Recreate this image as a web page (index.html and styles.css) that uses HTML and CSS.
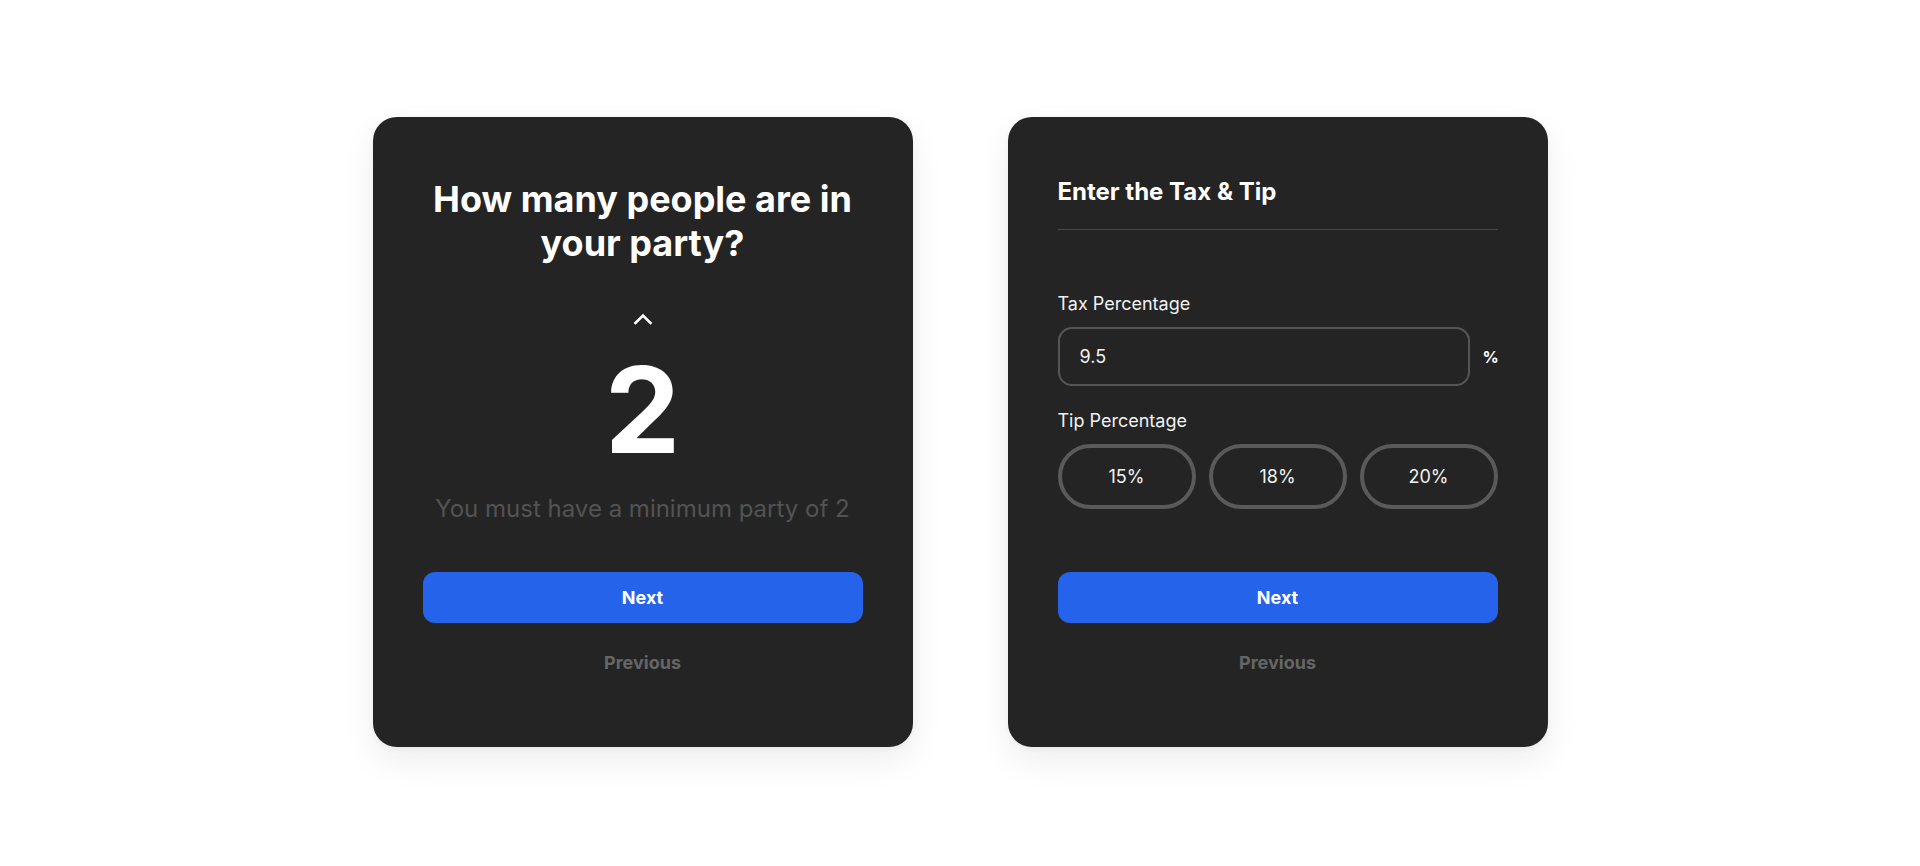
FILE: index.html
```html
<!DOCTYPE html>
<html lang="en">
<head>
<meta charset="utf-8">
<title>Split the bill</title>
<link rel="stylesheet" href="styles.css">
</head>
<body>
<main class="stage">
  <section class="card card-center">
    <h1 class="question">How many people are in your party?</h1>
    <button class="stepper" aria-label="Increase">
      <svg width="24" height="24" viewBox="0 0 24 24" fill="none" stroke="#fff" stroke-width="2.6" stroke-linecap="square" stroke-linejoin="miter"><path d="M4.5 16 L12 8.5 L19.5 16"/></svg>
    </button>
    <div class="count">2</div>
    <p class="hint">You must have a minimum party of 2</p>
    <button class="btn-primary">Next</button>
    <button class="btn-link">Previous</button>
  </section>

  <section class="card">
    <h2 class="card-title">Enter the Tax &amp; Tip</h2>
    <label class="field-label">Tax Percentage</label>
    <div class="input-row">
      <div class="input">9.5</div>
      <span class="unit">%</span>
    </div>
    <label class="field-label field-label-2">Tip Percentage</label>
    <div class="pills">
      <button class="pill">15%</button>
      <button class="pill">18%</button>
      <button class="pill">20%</button>
    </div>
    <button class="btn-primary btn-primary-2">Next</button>
    <button class="btn-link">Previous</button>
  </section>
</main>
</body>
</html>
```

FILE: styles.css
```css
* { box-sizing: border-box; }

html, body {
  margin: 0;
  padding: 0;
  background: #ffffff;
  overflow: hidden;
}

body {
  font-family: Inter, "Noto Sans", "Liberation Sans", sans-serif;
  color: #ffffff;
}

.stage {
  height: 866px;
  display: flex;
  justify-content: center;
  align-items: flex-start;
  padding-top: 117px;
  gap: 95px;
}

.card {
  width: 540px;
  height: 630px;
  background: #242424;
  border-radius: 24px;
  padding: 60px 50px 59px;
  display: flex;
  flex-direction: column;
  box-shadow: 0 14px 34px rgba(0, 0, 0, 0.07), 0 2px 6px rgba(0, 0, 0, 0.04);
}

.card-center {
  align-items: center;
  text-align: center;
}

.question {
  margin: 0;
  font-size: 36px;
  line-height: 44px;
  font-weight: 700;
  width: 100%;
}

.stepper {
  margin-top: 42px;
  width: 24px;
  height: 24px;
  padding: 0;
  border: 0;
  background: transparent;
  display: flex;
}

.count {
  margin-top: 19px;
  font-size: 120px;
  line-height: 120px;
  font-weight: 700;
}

.hint {
  margin: 24px 0 0;
  font-size: 24px;
  line-height: 29px;
  font-weight: 400;
  color: #535353;
}

.btn-primary {
  margin-top: 49px;
  width: 100%;
  height: 51px;
  border: 0;
  border-radius: 12px;
  background: #2563eb;
  color: #ffffff;
  font-family: inherit;
  font-size: 18px;
  font-weight: 700;
  flex-shrink: 0;
}

.btn-primary-2 {
  margin-top: 63px;
}

.btn-link {
  margin-top: 14px;
  width: 100%;
  height: 51px;
  border: 0;
  background: transparent;
  color: #666666;
  font-family: inherit;
  font-size: 18px;
  font-weight: 700;
  flex-shrink: 0;
}

.card-title {
  margin: 0;
  font-size: 24px;
  line-height: 29px;
  font-weight: 700;
  padding-bottom: 23px;
  border-bottom: 1px solid #4a4a4a;
}

.field-label {
  margin-top: 63px;
  font-size: 18px;
  line-height: 22px;
  font-weight: 400;
  color: #f2f2f2;
}

.field-label-2 {
  margin-top: 24px;
}

.input-row {
  margin-top: 12px;
  display: flex;
  align-items: center;
  gap: 13px;
}

.input {
  flex: 1;
  height: 59px;
  border: 2px solid #555555;
  border-radius: 14px;
  padding: 0 20px;
  display: flex;
  align-items: center;
  font-size: 18px;
  color: #f2f2f2;
}

.unit {
  font-size: 16px;
  font-weight: 700;
  width: 15px;
  text-align: right;
}

.pills {
  margin-top: 12px;
  display: flex;
  gap: 13px;
}

.pill {
  flex: 1;
  height: 65px;
  border: 4px solid #5a5a5a;
  border-radius: 999px;
  background: transparent;
  color: #f2f2f2;
  font-family: inherit;
  font-size: 18px;
  font-weight: 400;
}
```
